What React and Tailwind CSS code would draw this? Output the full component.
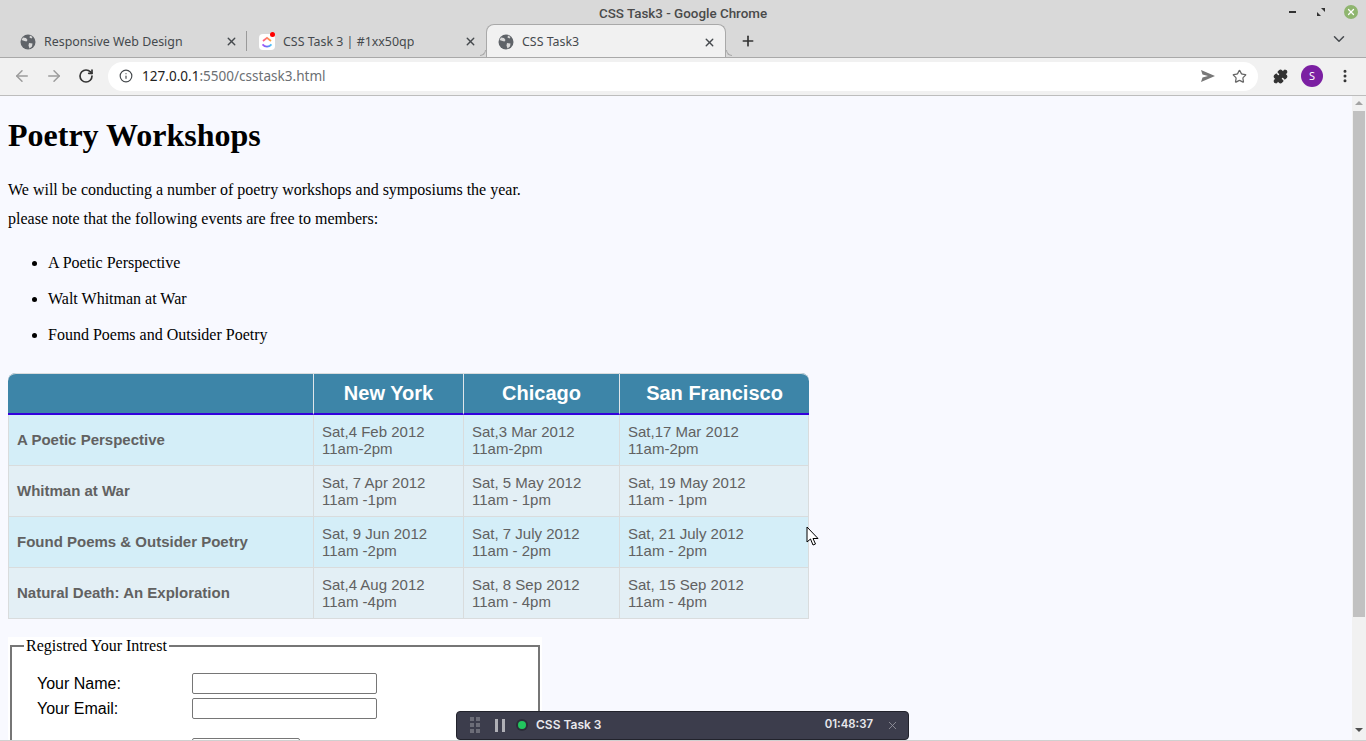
import React from "react";
import { ArrowLeft, ArrowRight, RotateCw, Info, Star, Plus, X, ChevronDown, Puzzle, EllipsisVertical } from "lucide-react";

const cities = ["New York", "Chicago", "San Francisco"];
const rows = [
  { name: "A Poetic Perspective", bg: "bg-[#d4eef8]", cells: [["Sat,4 Feb 2012", "11am-2pm"], ["Sat,3 Mar 2012", "11am-2pm"], ["Sat,17 Mar 2012", "11am-2pm"]] },
  { name: "Whitman at War", bg: "bg-[#e3eff5]", cells: [["Sat, 7 Apr 2012", "11am -1pm"], ["Sat, 5 May 2012", "11am - 1pm"], ["Sat, 19 May 2012", "11am - 1pm"]] },
  { name: "Found Poems & Outsider Poetry", bg: "bg-[#d4eef8]", cells: [["Sat, 9 Jun 2012", "11am -2pm"], ["Sat, 7 July 2012", "11am - 2pm"], ["Sat, 21 July 2012", "11am - 2pm"]] },
  { name: "Natural Death: An Exploration", bg: "bg-[#e3eff5]", cells: [["Sat,4 Aug 2012", "11am -4pm"], ["Sat, 8 Sep 2012", "11am - 4pm"], ["Sat, 15 Sep 2012", "11am - 4pm"]] },
];

function Globe() {
  return (
    <svg width="16" height="16" viewBox="0 0 16 16" className="shrink-0">
      <circle cx="8" cy="8" r="7.5" fill="#5f6368" />
      <path d="M3 3.5l3 .5 1.5 2-1 1.5-2-.5-3-1zM9 9l3.500.5-.5 3-2.500 2-1-3zM10 1.500l2.500 1.500-1 1.500-2-1z" fill="#d9d9d9" />
    </svg>
  );
}

function ClickUp() {
  return (
    <div className="relative w-4 h-4 bg-white rounded-sm shrink-0">
      <svg width="16" height="16" viewBox="0 0 16 16">
        <defs>
          <linearGradient id="cuTop" x1="0" y1="0" x2="1" y2="0">
            <stop offset="0" stopColor="#ff5a8a" />
            <stop offset="1" stopColor="#ffa53d" />
          </linearGradient>
          <linearGradient id="cuBottom" x1="0" y1="0" x2="1" y2="0">
            <stop offset="0" stopColor="#a855f7" />
            <stop offset="0.5" stopColor="#6c6cf5" />
            <stop offset="1" stopColor="#49ccf9" />
          </linearGradient>
        </defs>
        <path d="M4 7L8 3.800l4 3.200" fill="none" stroke="url(#cuTop)" strokeWidth="1.800" />
        <path d="M3.500 10.300c2.500 3 6.500 3 9 0" fill="none" stroke="url(#cuBottom)" strokeWidth="1.800" />
      </svg>
      <div className="absolute -top-[2px] right-0 w-[5px] h-[5px] rounded-full bg-[#f00]" />
    </div>
  );
}

function Tab({ title, icon, width, active, divider }) {
  return (
    <div className={`relative flex items-center ${width} ${active ? "pt-[2px] h-[33px] bg-[#f1f1f1] rounded-t-lg border border-b-0 border-[#a9a9a9] -mb-px pl-[11px]" : "pt-[4px] h-8"}`}>
      {icon}
      <span className="ml-2 text-[12.4px] text-[#45494d] truncate">{title}</span>
      <X size={13} strokeWidth={2.5} className="absolute right-[9px] top-[11px] text-[#45494d]" />
      {divider && <div className="absolute right-0 top-[7px] w-px h-[20px] bg-[#9a9a9a]" />}
      {active && <div className="absolute -left-[7px] bottom-px w-[6px] h-[6px] border-r border-b border-[#a9a9a9] rounded-br-[6px]" />}
      {active && <div className="absolute -right-[7px] bottom-px w-[6px] h-[6px] border-l border-b border-[#a9a9a9] rounded-bl-[6px]" />}
    </div>
  );
}

export default function App() {
  return (
    <div className="relative h-[741px] w-full overflow-hidden flex flex-col bg-[#f8f9ff] font-['Liberation_Serif',serif]">
      {/* browser chrome */}
      <div className="h-[58px] bg-[#d9d9d9] border-b border-[#a9a9a9] shrink-0 font-['Noto_Sans',sans-serif] relative">
        <div className="h-[28px] flex items-center justify-center text-[13.4px] font-medium text-[#4a4a4a] font-['Roboto',sans-serif]">CSS Task3 - Google Chrome</div>
        <div className="flex items-end h-8 -mt-[4px]">
          <Tab title="Responsive Web Design" icon={<Globe />} width="w-[247px] pl-[20px]" divider />
          <Tab title="CSS Task 3 | #1xx50qp" icon={<ClickUp />} width="w-[239px] pl-[12px]" />
          <Tab title="CSS Task3" icon={<Globe />} width="w-[240px]" active />
          <Plus size={16} strokeWidth={2.5} className="ml-[14px] mb-[7px] text-[#333]" />
          <ChevronDown size={18} strokeWidth={2} className="ml-auto mr-[18px] mb-[8px] text-[#45494d]" />
        </div>
        <div className="absolute right-[70px] top-[11px] w-[7px] h-[2px] bg-[#333]" />
        <svg width="8" height="8" viewBox="0 0 8 8" className="absolute right-[41px] top-[8px]">
          <path d="M4 0h4v4zM0 4v4h4z" fill="#333" />
        </svg>
        <div className="absolute right-[8px] top-[5px] w-[14px] h-[14px] rounded-full bg-[#8fb56f] flex items-center justify-center">
          <X size={10} strokeWidth={3} className="text-white" />
        </div>
      </div>
      <div className="h-[38px] bg-[#f1f1f1] border-b border-[#bdbdbd] shrink-0 flex items-center pb-px font-['Noto_Sans',sans-serif]">
        <ArrowLeft size={18} strokeWidth={2} className="ml-[13px] text-[#9c9c9c]" />
        <ArrowRight size={18} strokeWidth={2} className="ml-[14px] text-[#9c9c9c]" />
        <RotateCw size={16} strokeWidth={2.5} className="ml-[15px] text-[#333]" />
        <div className="ml-[14px] w-[1150px] h-[29px] bg-white rounded-full flex items-center pl-[11px] pr-[10px]">
          <Info size={14} strokeWidth={2} className="text-[#45494d]" />
          <span className="ml-[9px] text-[13.55px] text-[#222]">127.0.0.1<span className="text-[#6b6f73]">:5500/csstask3.html</span></span>
          <svg width="14" height="12" viewBox="0 0 14 12" className="ml-auto mr-[17px]"><path d="M0 0l14 6-14 6 1.500-4.500L7 6 1.500 4.500z" fill="#777" /></svg>
          <Star size={15} strokeWidth={2} className="mr-[1px] text-[#666]" />
        </div>
        <Puzzle size={15} strokeWidth={2} className="ml-[15px] text-[#333] fill-[#333]" />
        <div className="ml-[13px] w-[22px] h-[22px] rounded-full bg-[#7b1fa2] text-white text-[11px] flex items-center justify-center">S</div>
        <EllipsisVertical size={16} strokeWidth={2.5} className="ml-[14px] text-[#333]" />
      </div>

      {/* page */}
      <div className="flex-1 flex min-h-0">
        <div className="flex-1 min-w-0 overflow-hidden pl-2 text-black text-base">
          <h1 className="text-[32px] font-bold leading-[37px] mt-[21px] mb-[21px]">Poetry Workshops</h1>
          <p className="leading-[29px]">We will be conducting a number of poetry workshops and symposiums the year.</p>
          <p className="leading-[29px]">please note that the following events are free to members:</p>
          <ul className="list-disc pl-10 mt-[20px]">
            <li className="h-9 leading-[18px] pt-[1px]">A Poetic Perspective</li>
            <li className="h-9 leading-[18px] pt-[1px]">Walt Whitman at War</li>
            <li className="h-9 leading-[18px] pt-[1px]">Found Poems and Outsider Poetry</li>
          </ul>
          <table className="mt-[12px] w-[801px] table-fixed border-separate border-spacing-0 font-['Liberation_Sans',sans-serif] text-[15px] leading-[17px] text-[#616161]">
            <thead>
              <tr className="bg-[#3d85a8] text-white text-[20px] font-bold h-[42px]">
                <th className="w-[305px] rounded-tl-[8px] border-t border-t-[#d9dcdd] border-b-2 border-b-[#3300dd]" />
                {cities.map((c, i) => (
                  <th key={c} className={`border-t border-t-[#d9dcdd] border-l border-b-2 border-b-[#3300dd] border-l-[#dfe6ea] ${i === 0 ? "w-[150px]" : i === 1 ? "w-[156px]" : "rounded-tr-[8px]"}`}>{c}</th>
                ))}
              </tr>
            </thead>
            <tbody>
              {rows.map((r) => (
                <tr key={r.name} className={`${r.bg} h-[51px]`}>
                  <td className="pl-2 pb-[2px] border-l border-b border-[#d9dcdd] font-bold">{r.name}</td>
                  {r.cells.map((c, i) => (
                    <td key={i} className={`pl-2 border-l border-b border-[#d9dcdd] ${i === 2 ? "border-r" : ""}`}>
                      {c[0]}<br />{c[1]}
                    </td>
                  ))}
                </tr>
              ))}
            </tbody>
          </table>
          <div className="mt-[18px] w-[534px] bg-white pb-4">
            <fieldset className="mx-[2px] border-2 border-[#767676] border-solid pl-[12px] pr-[13px] pb-[10px] h-[130px]">
              <legend className="px-[2px] leading-[18px]">Registred Your Intrest</legend>
              <div className="mt-[16px] pl-[13px] font-['Liberation_Sans',sans-serif]">
                <label className="flex items-center h-[25px]"><span className="w-[155px]">Your Name:</span><input type="text" className="w-[185px] h-[21px] border border-[#767676] rounded-[2px] bg-white" /></label>
                <label className="flex items-center h-[25px]"><span className="w-[155px]">Your Email:</span><input type="text" className="w-[185px] h-[21px] border border-[#767676] rounded-[2px] bg-white" /></label>
                <div className="ml-[155px] mt-[17px] w-[108px] h-[21px] border border-[#767676] rounded-[2px] bg-white" />
              </div>
            </fieldset>
          </div>
        </div>
        <div className="w-[14px] bg-[#f1f1f1] relative shrink-0 flex flex-col items-center justify-between">
          <div className="mt-[5px] w-0 h-0 border-x-[4px] border-x-transparent border-b-[4px] border-b-[#a3a3a3]" />
          <div className="absolute left-[1px] right-[1px] top-[15px] h-[506px] bg-[#c1c1c1]" />
          <div className="mb-[9px] w-0 h-0 border-x-[4px] border-x-transparent border-t-[4px] border-t-[#505050]" />
        </div>
      </div>

      {/* timer overlay */}
      <div className="absolute left-[456px] top-[711px] w-[453px] h-[29px] rounded-[4px] bg-[#3c3d4c] border border-[#22232c] flex items-center pb-px text-white font-['Inter',sans-serif] text-[12px] font-semibold">
        <div className="ml-[13px] grid grid-cols-2 gap-[2px]">
          {[0, 1, 2, 3, 4, 5].map((d) => <div key={d} className="w-[4px] h-[4px] bg-[#6c6d78]" />)}
        </div>
        <div className="ml-[15px] flex gap-[4px]"><div className="w-[3px] h-[13px] bg-[#b0b0b6]" /><div className="w-[3px] h-[13px] bg-[#b0b0b6]" /></div>
        <div className="ml-[13px] w-[8px] h-[8px] rounded-full bg-[#22c55e] ring-2 ring-[#2c2d38]" />
        <span className="ml-[10px] text-[#e8e8ec]">CSS Task 3</span>
        <span className="ml-auto text-[11.4px] text-[#e8e8ec]">01:48:37</span>
        <X size={13} strokeWidth={1.5} className="ml-[13px] mr-[9px] text-[#9a9aa2]" />
      </div>

      {/* mouse cursor */}
      <svg width="14" height="20" viewBox="0 0 14 20" className="absolute left-[806px] top-[526px]">
        <path d="M1 1v15l3.500-3 2.500 6 2.500-1-2.500-5.500H12z" fill="#fff" stroke="#000" strokeWidth="1" />
      </svg>
      <div className="absolute left-0 right-0 bottom-0 h-px bg-[#d0d0d0]" />
    </div>
  );
}
